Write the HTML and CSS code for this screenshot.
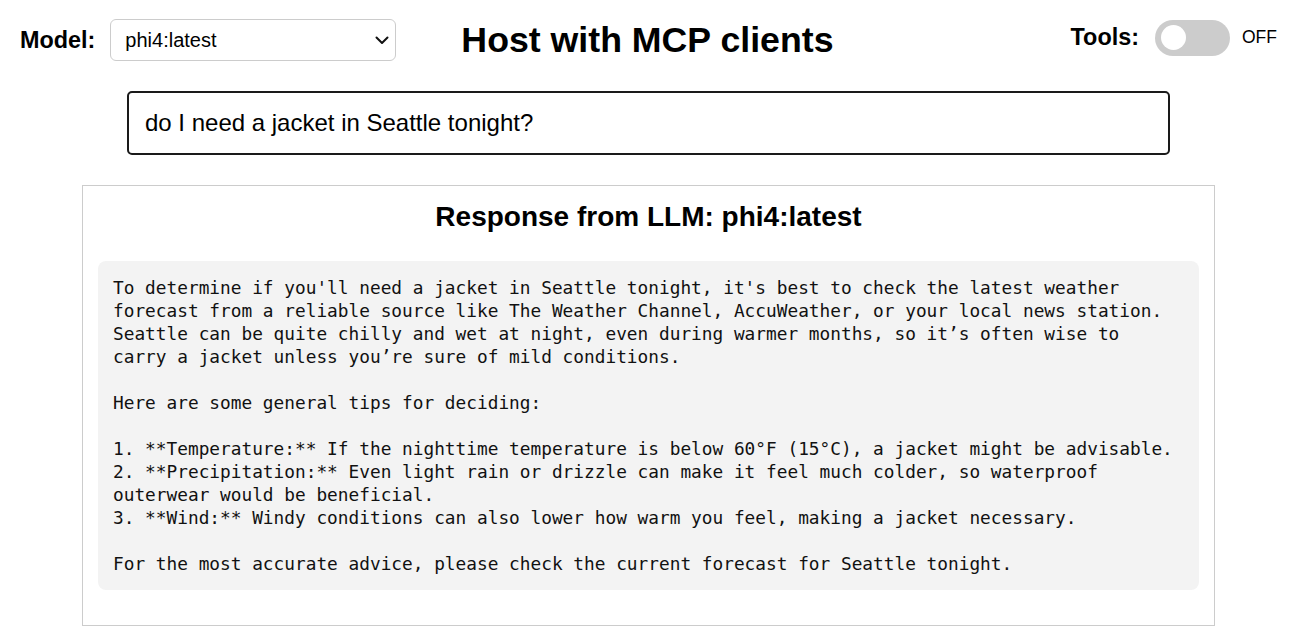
FILE: index.html
```html
<!DOCTYPE html>
<html lang="en">
<head>
    <meta charset="UTF-8">
    <meta name="viewport" content="width=device-width, initial-scale=1.0">
    <title>Host with MCP clients</title>
    <link rel="stylesheet" href="styles.css">
</head>
<body>
    <div class="header">
        <div class="model-picker">
            <label for="model">Model:</label>
            <span class="select-wrap">
                <select id="model" class="model-select">
                    <option>phi4:latest</option>
                    <option>llama3.2:latest</option>
                    <option>qwen2.5:latest</option>
                </select>
                <svg class="chevron" width="14" height="9" viewBox="0 0 14 9">
                    <path d="M1.5 1.5 L7 7 L12.5 1.5" fill="none" stroke="#111" stroke-width="2" stroke-linecap="round" stroke-linejoin="round"/>
                </svg>
            </span>
        </div>

        <h1>Host with MCP clients</h1>

        <div class="tools">
            <span class="tools-label">Tools:</span>
            <label class="switch">
                <input type="checkbox">
                <span class="slider"></span>
            </label>
            <span class="switch-state">OFF</span>
        </div>
    </div>

    <input type="text" class="prompt" value="do I need a jacket in Seattle tonight?">

    <div class="response">
        <h2>Response from LLM: phi4:latest</h2>
<pre>To determine if you'll need a jacket in Seattle tonight, it's best to check the latest weather
forecast from a reliable source like The Weather Channel, AccuWeather, or your local news station.
Seattle can be quite chilly and wet at night, even during warmer months, so it’s often wise to
carry a jacket unless you’re sure of mild conditions.

Here are some general tips for deciding:

1. **Temperature:** If the nighttime temperature is below 60°F (15°C), a jacket might be advisable.
2. **Precipitation:** Even light rain or drizzle can make it feel much colder, so waterproof
outerwear would be beneficial.
3. **Wind:** Windy conditions can also lower how warm you feel, making a jacket necessary.

For the most accurate advice, please check the current forecast for Seattle tonight.</pre>
    </div>
</body>
</html>
```

FILE: styles.css
```css
body {
    font-family: "Liberation Sans", Arial, sans-serif;
    margin: 0;
    padding: 19px 14px 0 20px;
    color: #000;
    background: #fff;
}
.header {
    display: flex;
    align-items: center;
    height: 42px;
}
.model-picker {
    display: flex;
    align-items: center;
    gap: 15px;
}
.model-picker label {
    font-weight: bold;
    font-size: 23.4px;
}
.select-wrap {
    position: relative;
    display: inline-block;
}
.model-select {
    display: block;
    width: 286px;
    height: 42px;
    padding: 0 40px 0 14px;
    font-family: inherit;
    font-size: 20px;
    color: #000;
    background: #fff;
    border: 1px solid #ccc;
    border-radius: 6px;
    appearance: none;
    -webkit-appearance: none;
}
.chevron {
    position: absolute;
    right: 7px;
    top: 17px;
    pointer-events: none;
}
h1 {
    margin: 0 0 0 65px;
    font-size: 35.7px;
    line-height: 42px;
}
.tools {
    display: flex;
    align-items: center;
    gap: 16px;
    margin: -5px 0 0 auto;
}
.tools-label {
    font-weight: bold;
    font-size: 23.4px;
}
.switch {
    position: relative;
    display: inline-block;
    width: 75px;
    height: 36px;
}
.switch input {
    opacity: 0;
    width: 0;
    height: 0;
}
.slider {
    position: absolute;
    cursor: pointer;
    inset: 0;
    background-color: #ccc;
    border-radius: 18px;
}
.slider:before {
    content: "";
    position: absolute;
    width: 25px;
    height: 25px;
    left: 6px;
    top: 5.5px;
    background: #fff;
    border-radius: 50%;
}
.switch-state {
    font-size: 17.5px;
    margin-left: -4px;
}
.prompt {
    display: block;
    box-sizing: border-box;
    width: 1043px;
    height: 64px;
    margin: 30px 0 0 107px;
    padding: 0 16px;
    font-family: inherit;
    font-size: 24px;
    color: #000;
    border: 2px solid #1a1a1a;
    border-radius: 5px;
    outline: none;
}
.response {
    box-sizing: border-box;
    width: 1133px;
    margin: 30px 0 0 62px;
    padding: 15px 15px 35px;
    border: 1px solid #ccc;
}
.response h2 {
    margin: 0 0 28px;
    text-align: center;
    font-size: 28px;
    line-height: 32px;
}
pre {
    margin: 0;
    padding: 15px;
    background-color: #f3f3f3;
    border-radius: 8px;
    font-family: "DejaVu Sans Mono", "Liberation Mono", monospace;
    font-size: 17.8px;
    line-height: 23px;
    color: #111;
    white-space: pre;
    overflow: hidden;
}
```
